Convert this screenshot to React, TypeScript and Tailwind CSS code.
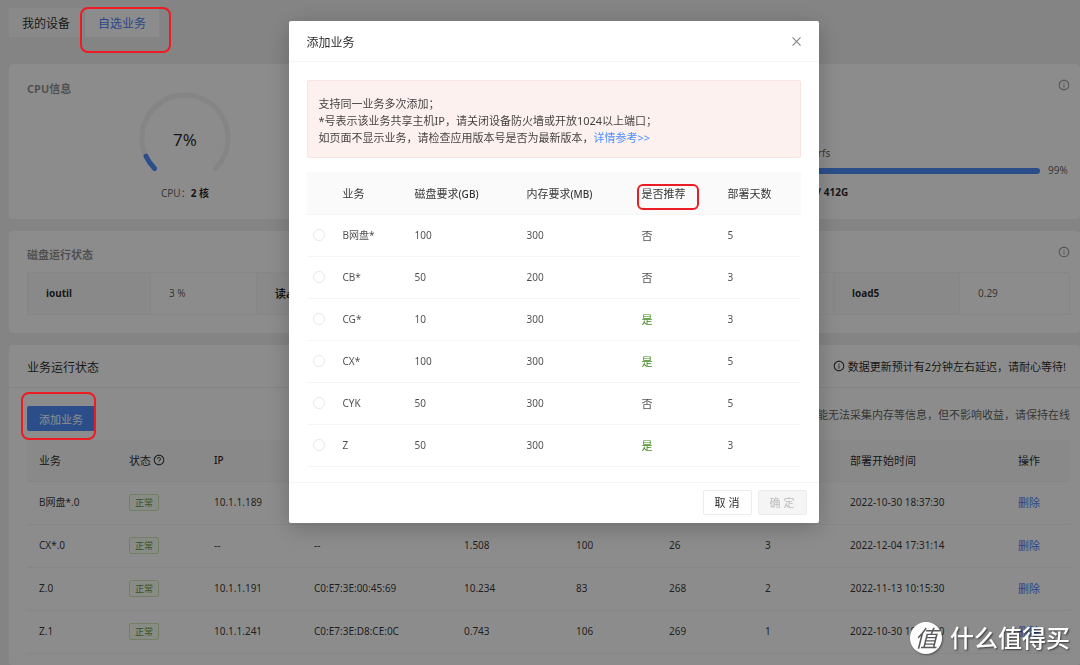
import React from 'react';
import { AiOutlineClose, AiOutlineInfoCircle, AiOutlineQuestionCircle } from 'react-icons/ai';

interface Service {
  name: string;
  disk: number;
  memory: number;
  recommended: boolean;
  days: number;
}

const services: Service[] = [
  { name: 'B网盘*', disk: 100, memory: 300, recommended: false, days: 5 },
  { name: 'CB*', disk: 50, memory: 200, recommended: false, days: 3 },
  { name: 'CG*', disk: 10, memory: 300, recommended: true, days: 3 },
  { name: 'CX*', disk: 100, memory: 300, recommended: true, days: 5 },
  { name: 'CYK', disk: 50, memory: 300, recommended: false, days: 5 },
  { name: 'Z', disk: 50, memory: 300, recommended: true, days: 3 },
];

const running = [
  ['B网盘*.0', '10.1.1.189', '--', '0.000', '100', '26', '5', '2022-10-30 18:37:30'],
  ['CX*.0', '--', '--', '1.508', '100', '26', '3', '2022-12-04 17:31:14'],
  ['Z.0', '10.1.1.191', 'C0:E7:3E:00:45:69', '10.234', '83', '268', '2', '2022-11-13 10:15:30'],
  ['Z.1', '10.1.1.241', 'C0:E7:3E:D8:CE:0C', '0.743', '106', '269', '1', '2022-10-30 18:37:30'],
];

const CpuGauge: React.FC = () => (
  <div className="relative h-[92px] w-[92px]">
    <svg viewBox="0 0 92 92" className="h-full w-full" fill="none" strokeWidth="5" strokeLinecap="round">
      <path d="M15.6 76.4A43 43 0 1 1 76.4 76.4" stroke="#f3f3f3" />
      <path d="M15.6 76.4A43 43 0 0 1 7 64.2" stroke="#4f8ffb" />
    </svg>
    <span className="absolute inset-0 flex items-center justify-center pt-[3px] text-[17px] text-black/85">7%</span>
  </div>
);

const Overview: React.FC = () => (
  <section className="flex h-[155px] justify-between rounded-sm bg-white pr-[10px] pl-[18px]">
    <div className="flex">
      <h2 className="mt-4 w-[112px] text-[11px] leading-[17px] font-bold text-black/45">CPU信息</h2>
      <div className="mt-7 flex flex-col items-center">
        <CpuGauge />
        <p className="mt-px text-[10px] leading-[17px] text-black/65">
          CPU：<b className="text-black/85">2 核</b>
        </p>
      </div>
    </div>
    <div className="flex w-[290px] flex-col">
      <AiOutlineInfoCircle className="mt-[15px] self-end text-[12px] text-black/45" />
      <div className="mt-[54px] pl-[10px] text-[10px] leading-[17px] text-black/65">
        <p>md btrfs</p>
        <div className="flex items-center gap-2">
          <div className="h-[6px] flex-1 rounded-full bg-[#4f8ffb]" />
          <span className="w-[22px]">99%</span>
        </div>
        <p className="mt-[5px] font-bold text-black/85">409G / 412G</p>
      </div>
    </div>
  </section>
);

const DiskStatus: React.FC = () => (
  <section className="mt-3 h-[102px] rounded-sm bg-white pr-[10px] pl-[18px]">
    <div className="flex items-start justify-between pt-[15px]">
      <h2 className="text-[11px] leading-[17px] font-bold text-black/45">磁盘运行状态</h2>
      <AiOutlineInfoCircle className="text-[12px] text-black/45" />
    </div>
    <table className="mt-[9px] w-full table-fixed border-collapse text-left text-[10px] leading-[17px]">
      <tbody>
        <tr className="h-[42px] [&>td]:border [&>td]:border-[#f5f5f5] [&>td]:px-[18px] [&>td]:text-black/65 [&>th]:border [&>th]:border-[#f5f5f5] [&>th]:bg-[#fafafa] [&>th]:px-[18px] [&>th]:text-black/85">
          <th scope="row" className="w-[123px]">ioutil</th>
          <td className="w-[106px]">3 %</td>
          <th scope="row" className="text-[11px]">读await</th>
          <td>0.52</td>
          <th scope="row">load1</th>
          <td>0.31</td>
          <th scope="row" className="w-[126px]">load5</th>
          <td className="w-[110px]">0.29</td>
        </tr>
      </tbody>
    </table>
  </section>
);

const RunningServices: React.FC = () => (
  <section className="mt-3 flex-1 rounded-sm bg-white">
    <header className="flex h-[43px] items-center justify-between border-b border-[#f0f0f0] pr-[14px] pl-[18px]">
      <h2 className="pt-[3px] text-[12px] text-black/85">业务运行状态</h2>
      <p className="flex items-center gap-[3px] text-[11px] leading-[17px] text-black/85">
        <AiOutlineInfoCircle className="text-[12px]" />
        数据更新预计有2分钟左右延迟，请耐心等待!
      </p>
    </header>
    <div className="pr-[10px] pl-[18px]">
      <div className="flex items-start justify-between pt-[18px] pb-[9px]">
        <button type="button" className="h-[25px] rounded-xs bg-[#4f8ffb] px-3 pt-px text-[11px] leading-[17px] text-white">
          添加业务
        </button>
        <p className="text-[11px] leading-[17px] text-black/65">
          部分业务可能无法采集内存等信息，但不影响收益，请保持在线
        </p>
      </div>
      <table className="w-full table-fixed border-collapse text-left text-[10px] leading-[17px] text-black/80 [&_td]:px-3 [&_th]:px-3">
        <thead className="bg-[#fafafa] text-[11px] text-black/85">
          <tr className="h-[41px] border-b border-[#f5f5f5] [&>th]:font-normal">
            <th className="w-[90px]">业务</th>
            <th className="w-[85px]">
              <span className="flex items-center gap-[2px]">
                状态 <AiOutlineQuestionCircle className="text-[12px]" />
              </span>
            </th>
            <th className="w-[100px] text-[10px]">
              <span className="font-medium">IP</span>
            </th>
            <th className="w-[150px]">MAC</th>
            <th className="w-[112px]">上行(Mbps)</th>
            <th className="w-[93px]">内存(MB)</th>
            <th className="w-[96px]">运行天数</th>
            <th className="w-[85px]">部署天数</th>
            <th>部署开始时间</th>
            <th className="w-[64px]">操作</th>
          </tr>
        </thead>
        <tbody>
          {running.map(([name, ...rest]) => (
            <tr key={name} className="h-[43px] border-b border-[#f5f5f5]">
              <td>{name}</td>
              <td>
                <span className="inline-block rounded-xs border border-[#cfe8b8] bg-[#fafff5] px-[5px] text-[9px] leading-[15px] text-[#5f9e38]">
                  正常
                </span>
              </td>
              {rest.map((value, i) => (
                <td key={i}>{value}</td>
              ))}
              <td>
                <a href="#delete" className="text-[11px] text-[#4f7ffb]">删除</a>
              </td>
            </tr>
          ))}
        </tbody>
      </table>
    </div>
  </section>
);

const AddServiceModal: React.FC = () => (
  <div className="fixed inset-0 z-10 flex items-start justify-center bg-black/45 pt-[21px] pl-[27px]">
    <div
      role="dialog"
      aria-labelledby="add-title"
      className="w-[530px] rounded-xs bg-white shadow-[0_5px_24px_rgba(0,0,0,0.22)]"
    >
      <header className="flex h-[41px] items-center justify-between border-b border-[#f5f5f5] px-[18px]">
        <h2 id="add-title" className="pt-[3px] text-[12px] text-black/85">添加业务</h2>
        <button type="button" aria-label="关闭" className="-mr-1 p-[2px] text-[13px] text-black/50">
          <AiOutlineClose />
        </button>
      </header>

      <div className="px-[18px] pt-[18px] pb-[15px]">
        <div className="rounded-xs border border-[#f8e4e0] bg-[#fcf1ef] px-[11px] pt-[14px] pb-[11px] text-[11px] leading-[17px] text-black/75">
          <p>支持同一业务多次添加；</p>
          <p>*号表示该业务共享主机IP，请关闭设备防火墙或开放1024以上端口；</p>
          <p>
            如页面不显示业务，请检查应用版本号是否为最新版本，
            <a href="#help" className="text-[#4f8ffb]">详情参考&gt;&gt;</a>
          </p>
        </div>

        <table className="mt-[14px] w-full table-fixed border-collapse text-left text-[10px] leading-[17px] text-black/70 [&_td]:px-3 [&_th]:px-3">
          <thead className="bg-[#fafafa] text-[11px] text-black/80">
            <tr className="h-[42px] border-b border-[#f5f5f5] [&>th]:pt-[2px] [&>th]:font-normal">
              <th className="w-[24px]" />
              <th className="w-[72px]">业务</th>
              <th className="w-[112px]">
                磁盘要求<span className="text-[10px] font-medium">(GB)</span>
              </th>
              <th>
                内存要求<span className="text-[10px] font-medium">(MB)</span>
              </th>
              <th className="w-[86px]">是否推荐</th>
              <th className="w-[85px]">部署天数</th>
            </tr>
          </thead>
          <tbody>
            {services.map((s) => (
              <tr key={s.name} className="h-[42px] border-b border-[#f5f5f5]">
                <td className="!px-[6px]">
                  <input
                    type="radio"
                    name="service"
                    id={`service-${s.name}`}
                    className="block h-3 w-3 appearance-none rounded-full border border-[#e8e8e8] bg-white"
                  />
                </td>
                <td>
                  <label htmlFor={`service-${s.name}`}>{s.name}</label>
                </td>
                <td>{s.disk}</td>
                <td>{s.memory}</td>
                <td className={s.recommended ? 'text-[11px] text-[#3f8a20]' : 'text-[11px]'}>
                  {s.recommended ? '是' : '否'}
                </td>
                <td>{s.days}</td>
              </tr>
            ))}
          </tbody>
        </table>
      </div>

      <footer className="flex h-[41px] items-center justify-end gap-[6px] border-t border-[#f5f5f5] px-3 text-[11px]">
        <button type="button" className="h-[25px] w-[49px] rounded-xs border border-[#ececec] bg-white pt-[2px] text-black/85">
          取 消
        </button>
        <button
          type="button"
          disabled
          className="h-[25px] w-[49px] rounded-xs border border-[#ececec] bg-[#f5f5f5] pt-[2px] text-black/25"
        >
          确 定
        </button>
      </footer>
    </div>
  </div>
);

// Red frames and site mark drawn on top of everything
const Annotations: React.FC = () => (
  <div className="pointer-events-none absolute inset-0 z-20">
    <div className="absolute top-[7px] left-[80px] h-[46px] w-[91px] rounded-lg border-2 border-[#ed1c24]" />
    <div className="absolute top-[392px] left-[21px] h-[48px] w-[75px] rounded-lg border-2 border-[#ed1c24]" />
    <div className="absolute top-[184px] left-[637px] h-[26px] w-[62px] rounded-md border-2 border-[#ed1c24]" />
    <div className="absolute right-[10px] bottom-[11px] flex items-center gap-[8px] text-white">
      <span className="flex h-8 w-8 items-center justify-center rounded-full bg-white text-[23px] leading-none text-[#5a5a5a] italic shadow-[1px_1px_2px_rgba(0,0,0,0.4)]">
        值
      </span>
      <span className="text-[24px] leading-8 font-medium [text-shadow:1px_1px_2px_rgba(0,0,0,0.6)]">什么值得买</span>
    </div>
  </div>
);

export default function App() {
  return (
    <div className="relative flex min-h-screen w-full flex-col overflow-hidden bg-[#f0f0f0] pt-2 pl-[9px] font-['Noto_Sans','Noto_Sans_CJK_SC',sans-serif]">
      <nav className="mb-[27px] flex gap-[2px] text-[12px]">
        <button type="button" className="h-[29px] bg-[#fafafa] px-[13px] pt-[2px] text-black/85">我的设备</button>
        <button type="button" className="h-[29px] bg-white px-[13px] pt-[2px] text-[#4f7ffb]">自选业务</button>
      </nav>
      <Overview />
      <DiskStatus />
      <RunningServices />
      <AddServiceModal />
      <Annotations />
    </div>
  );
}
